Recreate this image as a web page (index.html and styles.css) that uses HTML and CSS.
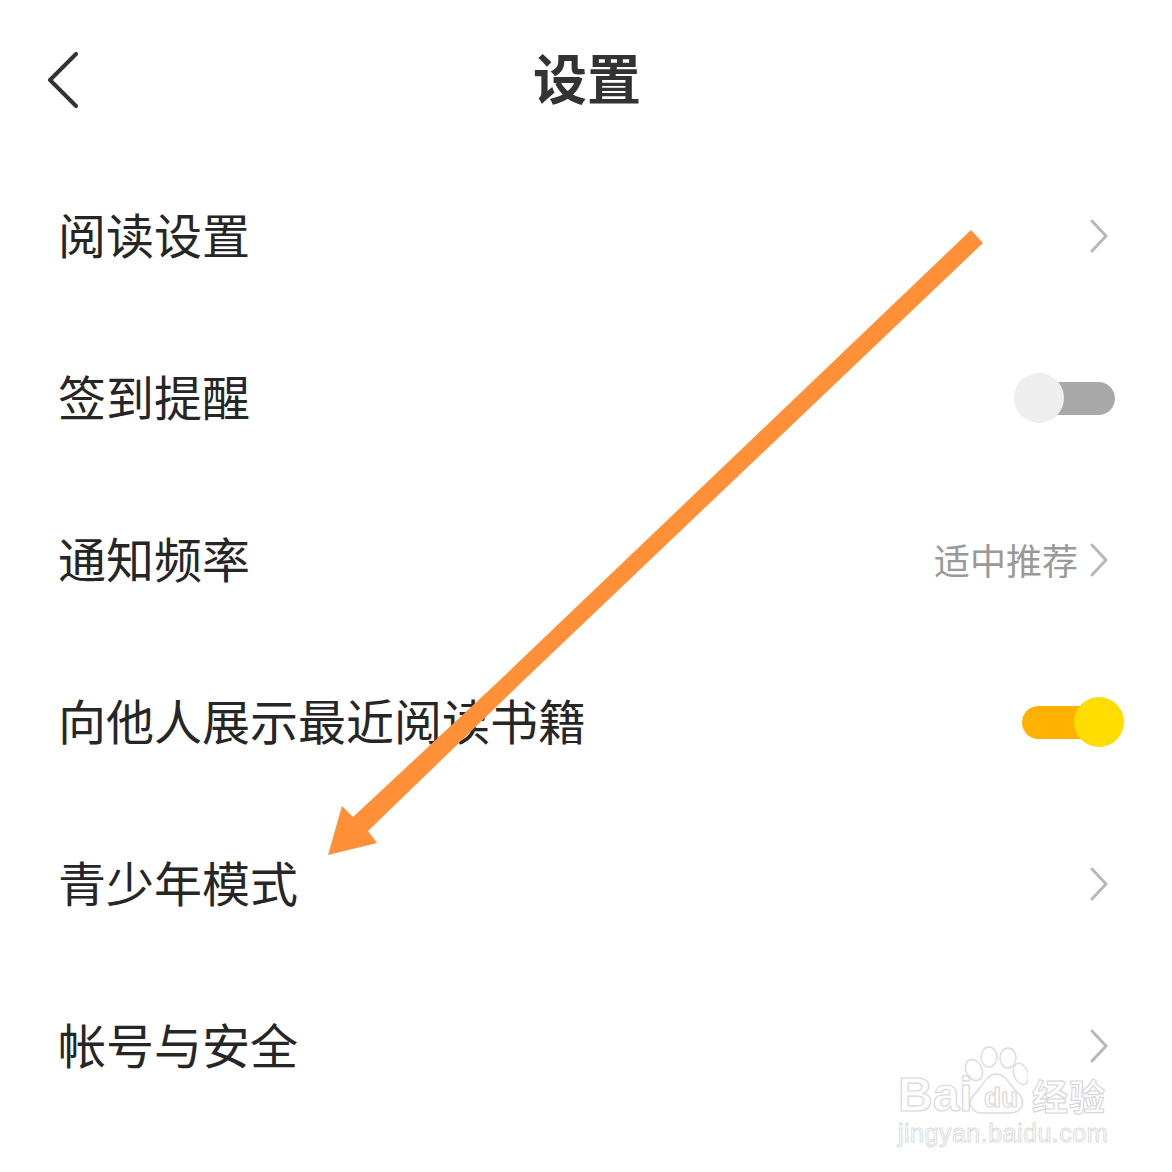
FILE: index.html
```html
<!DOCTYPE html>
<html lang="zh-CN">
<head>
    <meta charset="UTF-8">
    <meta name="viewport" content="width=device-width, initial-scale=1.0">
    <title>设置</title>
    <link rel="stylesheet" href="styles.css">
</head>
<body>
    <div class="page">
        <header class="header">
            <svg class="back" width="30" height="56" viewBox="0 0 30 56"><path d="M28 2 L2 28 L28 54" /></svg>
            <h1 class="title">设置</h1>
        </header>

        <div class="list">
            <div class="row">
                <span class="label">阅读设置</span>
                <svg class="chevron" width="20" height="34" viewBox="0 0 20 34"><path d="M2 2 L16 17 L2 32" /></svg>
            </div>
            <div class="row">
                <span class="label">签到提醒</span>
                <div class="switch switch-off"><span class="knob"></span></div>
            </div>
            <div class="row">
                <span class="label">通知频率</span>
                <div class="value-wrap">
                    <span class="value">适中推荐</span>
                    <svg class="chevron" width="20" height="34" viewBox="0 0 20 34"><path d="M2 2 L16 17 L2 32" /></svg>
                </div>
            </div>
            <div class="row">
                <span class="label">向他人展示最近阅读书籍</span>
                <div class="switch switch-on"><span class="knob"></span></div>
            </div>
            <div class="row">
                <span class="label">青少年模式</span>
                <svg class="chevron" width="20" height="34" viewBox="0 0 20 34"><path d="M2 2 L16 17 L2 32" /></svg>
            </div>
            <div class="row">
                <span class="label">帐号与安全</span>
                <svg class="chevron" width="20" height="34" viewBox="0 0 20 34"><path d="M2 2 L16 17 L2 32" /></svg>
            </div>
        </div>

        <!-- annotation arrow drawn over the list -->
        <svg class="arrow" width="1172" height="1172" viewBox="0 0 1172 1172">
            <polygon points="971,230 983,243 524,680 368,831 377,843 328,855 342,806 353,817 500,680" />
        </svg>

        <div class="watermark">
            <svg class="paw" width="64" height="68" viewBox="0 0 64 68">
                <ellipse cx="10" cy="24" rx="8" ry="11" transform="rotate(-25 10 24)" />
                <ellipse cx="25" cy="11" rx="8" ry="10" />
                <ellipse cx="44" cy="12" rx="8" ry="10" />
                <ellipse cx="57" cy="28" rx="7" ry="11" transform="rotate(-20 57 28)" />
                <path d="M32 28 C22 28 18 42 9 50 C3 58 8 67 18 67 C26 67 38 67 46 67 C58 67 62 56 55 48 C46 40 42 28 32 28 Z" />
            </svg>
            <div class="mark-top">
                <span class="mark-bai">Bai</span>
                <span class="mark-du">du</span>
                <span class="mark-cn">经验</span>
            </div>
            <div class="mark-url">jingyan.baidu.com</div>
        </div>
    </div>
</body>
</html>
```

FILE: styles.css
```css
body {
    margin: 0;
    background-color: #fff;
    font-family: "Noto Sans CJK SC", "Liberation Sans", sans-serif;
}

.page {
    position: relative;
    width: 1172px;
    height: 1172px;
    overflow: hidden;
}

.header {
    height: 155px;
    display: flex;
    align-items: center;
    justify-content: center;
    position: relative;
}

.back {
    position: absolute;
    left: 48px;
    top: 52px;
}

.back path {
    fill: none;
    stroke: #333;
    stroke-width: 4;
    stroke-linecap: round;
    stroke-linejoin: round;
}

.title {
    margin: 0 0 1px 2px;
    font-size: 54px;
    font-weight: 700;
    color: #333;
    line-height: 1;
}

.row {
    height: 162px;
    padding-left: 58px;
    padding-right: 62px;
    display: flex;
    align-items: center;
    justify-content: space-between;
}

.label {
    margin-bottom: 7px;
    font-size: 48px;
    color: #262626;
    line-height: 1;
}

.chevron {
    flex-shrink: 0;
}

.chevron path {
    fill: none;
    stroke: #b8b8b8;
    stroke-width: 3;
    stroke-linecap: round;
    stroke-linejoin: round;
}

.value-wrap {
    display: flex;
    align-items: center;
    gap: 12px;
}

.value {
    margin-bottom: 3px;
    font-size: 36px;
    color: #999;
    line-height: 1;
}

.switch {
    position: relative;
    height: 33px;
    border-radius: 17px;
}

.switch-off {
    width: 85px;
    background-color: #a9a9a9;
    margin-right: -5px;
}

.switch-on {
    width: 88px;
    background-color: #ffb000;
    margin-right: 0;
}

.knob {
    position: absolute;
    top: -8.5px;
    width: 50px;
    height: 50px;
    border-radius: 50%;
}

.switch-off .knob {
    left: -16px;
    background-color: #eee;
}

.switch-on .knob {
    left: 52px;
    background-color: #ffdd00;
}

.arrow {
    position: absolute;
    left: 0;
    top: 0;
}

.arrow polygon {
    fill: #ff9038;
}

.watermark {
    position: absolute;
    left: 898px;
    top: 1046px;
    width: 212px;
    height: 100px;
}

.paw {
    position: absolute;
    left: 66px;
    top: 0;
}

.paw ellipse,
.paw path {
    fill: #fff;
    stroke: #dcdcdc;
    stroke-width: 1.5;
}

.mark-top {
    position: absolute;
    left: 0;
    top: 27px;
    width: 212px;
    height: 44px;
    font-family: "Liberation Sans", sans-serif;
    color: transparent;
    -webkit-text-stroke: 1.2px #d8d8d8;
    line-height: 44px;
}

.mark-bai {
    position: absolute;
    left: 0;
    font-size: 48px;
    font-weight: 700;
}

.mark-du {
    position: absolute;
    left: 86px;
    top: 3px;
    font-size: 28px;
    font-weight: 700;
}

.mark-cn {
    position: absolute;
    left: 134px;
    font-family: "Noto Sans CJK SC", sans-serif;
    font-size: 36px;
    font-weight: 700;
    letter-spacing: 1px;
}

.mark-url {
    position: absolute;
    left: 0;
    top: 72px;
    font-family: "Liberation Sans", sans-serif;
    font-size: 25px;
    line-height: 30px;
    letter-spacing: 0.5px;
    white-space: nowrap;
    color: transparent;
    -webkit-text-stroke: 1px #dcdcdc;
}
```
